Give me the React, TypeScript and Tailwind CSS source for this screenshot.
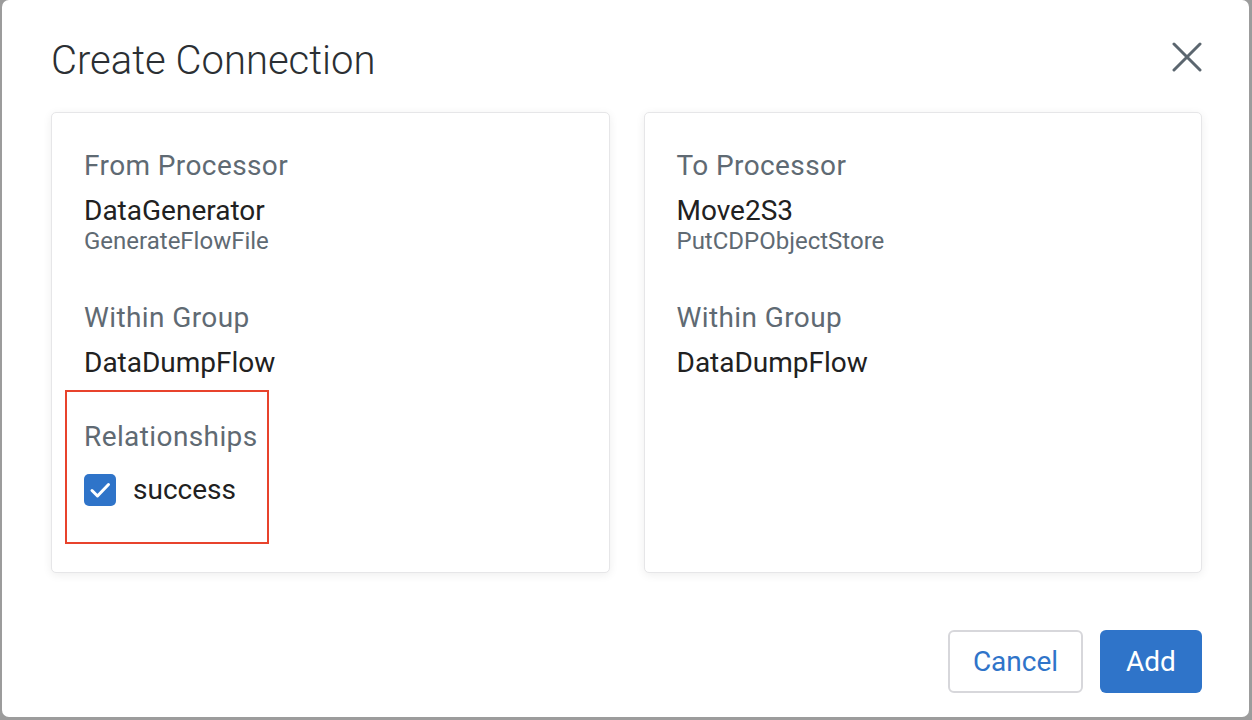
import React from 'react';

interface ProcessorInfo {
    heading: string;
    name: string;
    type: string;
    group: string;
}

const from: ProcessorInfo = {
    heading: 'From Processor',
    name: 'DataGenerator',
    type: 'GenerateFlowFile',
    group: 'DataDumpFlow',
};

const to: ProcessorInfo = {
    heading: 'To Processor',
    name: 'Move2S3',
    type: 'PutCDPObjectStore',
    group: 'DataDumpFlow',
};

const CloseIcon: React.FC = () => (
    <svg width="30" height="30" viewBox="0 0 30 30" fill="none">
        <path d="M2 2 L28 28 M28 2 L2 28" stroke="#5b666f" strokeWidth="3" strokeLinecap="round" />
    </svg>
);

const CheckBox: React.FC = () => (
    <div className="w-[32px] h-[32px] rounded-[5px] bg-[#2f74c9] flex items-center justify-center shrink-0">
        <svg width="32" height="32" viewBox="0 0 32 32" fill="none">
            <path d="M8 16.5 L13.5 22 L24.5 10.5" stroke="#ffffff" strokeWidth="3" strokeLinecap="round" strokeLinejoin="round" />
        </svg>
    </div>
);

const ProcessorCard: React.FC<{ info: ProcessorInfo; children?: React.ReactNode }> = ({ info, children }) => (
    <div className="flex-1 h-[461px] bg-white border border-[#e6e6e8] rounded-[5px] shadow-[0_2px_10px_rgba(0,0,0,0.07)] pl-[32px] pt-[37px]">
        <div className="text-[28px] leading-[32px] tracking-[0.4px] text-[#5f6a73]">{info.heading}</div>
        <div className="mt-[13px] text-[28px] leading-[32px] text-[#212121]">{info.name}</div>
        <div className="text-[24px] leading-[28px] text-[#5f6a73]">{info.type}</div>
        <div className="mt-[47px] text-[28px] leading-[32px] tracking-[0.4px] text-[#5f6a73]">Within Group</div>
        <div className="mt-[13px] text-[28px] leading-[32px] text-[#212121]">{info.group}</div>
        {children}
    </div>
);

export default function App() {
    return (
        <div className="w-[1252px] h-[720px] bg-[#9c9c9c] font-['Roboto','Liberation_Sans',sans-serif] overflow-hidden">
            <div className="ml-[2px] w-[1247px] h-[717px] bg-white rounded-[7px] pl-[49px] pr-[47px] pt-[37px] pb-[24px] flex flex-col">
                <div className="flex items-start justify-between">
                    <h1 className="text-[40px] leading-[48px] font-light text-[#2b2f33]">Create Connection</h1>
                    <div className="mt-[5px]">
                        <CloseIcon />
                    </div>
                </div>

                <div className="mt-[27px] flex gap-[34px]">
                    <ProcessorCard info={from}>
                        <div className="mt-[11px] -ml-[19px] w-[204px] border-2 border-[#e8432c] pl-[17px] pt-[29px] pb-[36px]">
                            <div className="text-[28px] leading-[32px] tracking-[0.4px] text-[#5f6a73]">Relationships</div>
                            <div className="mt-[21px] flex items-center gap-[17px]">
                                <CheckBox />
                                <span className="text-[28px] leading-[32px] text-[#212121]">success</span>
                            </div>
                        </div>
                    </ProcessorCard>
                    <ProcessorCard info={to} />
                </div>

                <div className="mt-auto flex justify-end gap-[17px]">
                    <button className="w-[135px] h-[63px] rounded-[6px] border-2 border-[#d7d7db] bg-white text-[28px] text-[#2f74c9]">
                        Cancel
                    </button>
                    <button className="w-[102px] h-[63px] rounded-[6px] bg-[#2f74c9] text-[28px] text-white">
                        Add
                    </button>
                </div>
            </div>
        </div>
    );
}
